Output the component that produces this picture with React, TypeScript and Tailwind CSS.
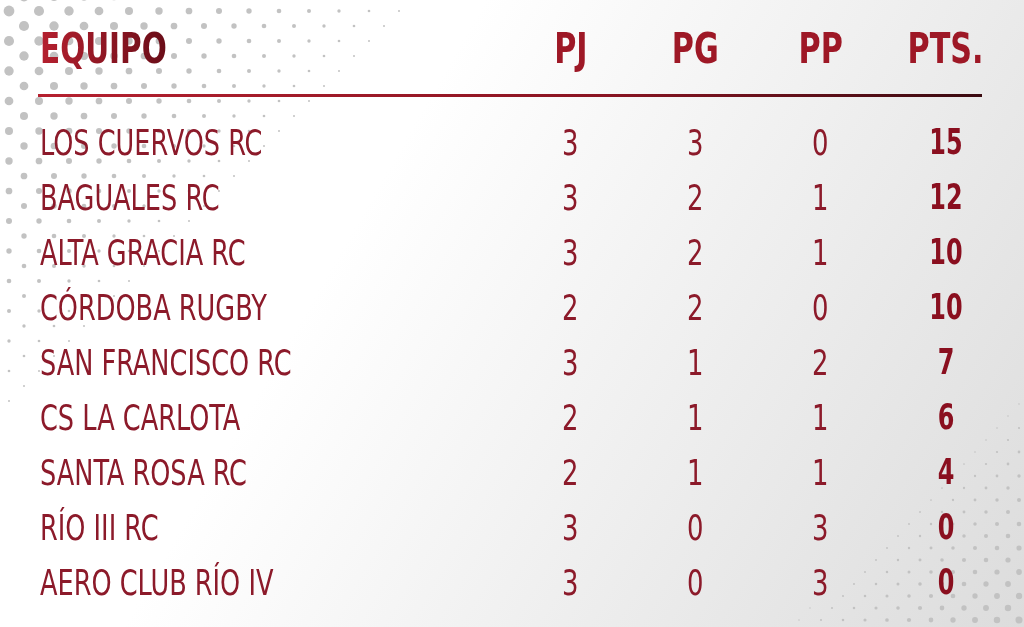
import React from 'react';

// Tabla de posiciones
const equipos = [
  { nombre: 'LOS CUERVOS RC', pj: 3, pg: 3, pp: 0, pts: 15 },
  { nombre: 'BAGUALES RC', pj: 3, pg: 2, pp: 1, pts: 12 },
  { nombre: 'ALTA GRACIA RC', pj: 3, pg: 2, pp: 1, pts: 10 },
  { nombre: 'CÓRDOBA RUGBY', pj: 2, pg: 2, pp: 0, pts: 10 },
  { nombre: 'SAN FRANCISCO RC', pj: 3, pg: 1, pp: 2, pts: 7 },
  { nombre: 'CS LA CARLOTA', pj: 2, pg: 1, pp: 1, pts: 6 },
  { nombre: 'SANTA ROSA RC', pj: 2, pg: 1, pp: 1, pts: 4 },
  { nombre: 'RÍO III RC', pj: 3, pg: 0, pp: 3, pts: 0 },
  { nombre: 'AERO CLUB RÍO IV', pj: 3, pg: 0, pp: 3, pts: 0 },
];

// Puntos de semitono (esquinas)
type Dot = { x: number; y: number; r: number };

const buildDots = (): Dot[] => {
  const dots: Dot[] = [];
  // arriba a la izquierda
  for (let i = 0; i < 50; i++) {
    for (let j = 0; j < 30; j++) {
      const x = j * 30 + (i % 2) * 15 - 6;
      const y = i * 15 - 4;
      const d1 = x + y;
      const r1 = 5.6 * (1 - d1 / 500);
      if (r1 > 0.7) dots.push({ x, y, r: r1 });
    }
  }
  // abajo a la derecha
  for (let i = 0; i < 30; i++) {
    for (let j = 0; j < 30; j++) {
      const x = 1030 - j * 22 - (i % 2) * 11;
      const y = 632 - i * 12;
      const d2 = 1030 - x + (632 - y);
      const r2 = 3.8 * (1 - d2 / 300);
      if (r2 > 0.7) dots.push({ x, y, r: r2 });
    }
  }
  return dots;
};

const dots = buildDots();

const font = "font-['Liberation_Sans_Narrow','DejaVu_Sans_Condensed','Roboto',sans-serif] [font-stretch:condensed]";

const cols = 'grid grid-cols-[468px_125px_125px_125px_125px] pl-[40px]';

const App: React.FC = () => {
  return (
    <div className="relative w-[1024px] h-[627px] overflow-hidden bg-[linear-gradient(120deg,#ffffff_35%,#dcdcdc_100%)]">
      <svg className="absolute inset-0" width="1024" height="627">
        {dots.map((d, k) => (
          <circle key={k} cx={d.x} cy={d.y} r={d.r} fill="#c2c2c2" />
        ))}
      </svg>

      <div className={`relative ${font}`}>
        {/* CABECERA */}
        <div className={`${cols} pt-[28px] h-[94px] text-[42px] font-bold leading-[42px] text-[#9e1826]`}>
          <span className="inline-block origin-left scale-x-[0.78] w-fit bg-[linear-gradient(90deg,#b5202f,#6a0d18)] bg-clip-text text-transparent">
            EQUIPO
          </span>
          <span className="text-center"><span className="inline-block scale-x-[0.8]">PJ</span></span>
          <span className="text-center"><span className="inline-block scale-x-[0.8]">PG</span></span>
          <span className="text-center"><span className="inline-block scale-x-[0.8]">PP</span></span>
          <span className="text-center"><span className="inline-block scale-x-[0.8]">PTS.</span></span>
        </div>
        <div className="ml-[38px] w-[944px] h-[3px] bg-[linear-gradient(90deg,#b5202f,#8a1422_60%,#3a0a10)]" />

        {/* FILAS */}
        <div className="flex flex-col pt-[18px]">
          {equipos.map((e) => (
            <div key={e.nombre} className={`${cols} h-[55px] items-center text-[36px] leading-none text-[#8c1a2a]`}>
              <span className="inline-block origin-left scale-x-[0.79] whitespace-nowrap">{e.nombre}</span>
              <span className="text-center"><span className="inline-block scale-x-[0.8]">{e.pj}</span></span>
              <span className="text-center"><span className="inline-block scale-x-[0.8]">{e.pg}</span></span>
              <span className="text-center"><span className="inline-block scale-x-[0.8]">{e.pp}</span></span>
              <span className="text-center font-bold text-[#8a0f1f] text-[35px]">
                <span className="inline-block scale-x-[0.76]">{e.pts}</span>
              </span>
            </div>
          ))}
        </div>
      </div>
    </div>
  );
};

export default App;
